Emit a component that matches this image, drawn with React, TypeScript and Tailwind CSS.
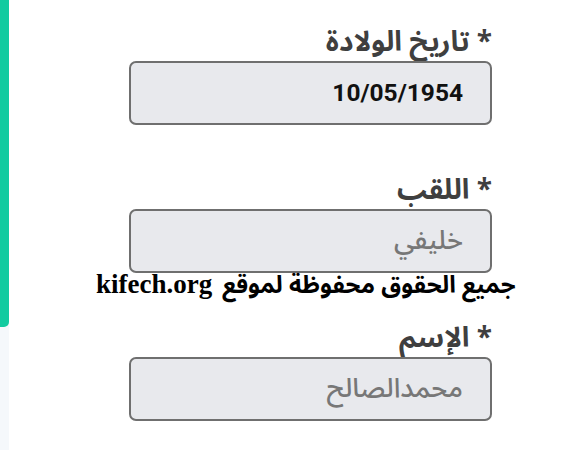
import React from "react";

const fields = [
  { label: "تاريخ الولادة", value: "10/05/1954", filled: true },
  { label: "اللقب", value: "خليفي", filled: false },
  { label: "الإسم", value: "محمدالصالح", filled: false },
];

const arabicFont = '"Noto Sans Arabic", "Noto Sans", "DejaVu Sans", sans-serif';

export default function App() {
  return (
    <div className="relative flex h-[450px] w-[561px] overflow-hidden bg-white">
      <div className="flex w-[9px] flex-col bg-[#f5f8fb]">
        <div className="h-[327px] rounded-br-[5px] bg-[#12cba0]" />
      </div>
      <div className="flex flex-1 flex-col items-end pr-[69px] pt-[24px]">
        {fields.map((f, i) => (
          <div key={i} className="mb-[47px] flex w-[363px] flex-col" dir="rtl">
            <div
              className="h-[37px] text-[28px] font-bold leading-[37px] text-[#3f3f3f]"
              style={{ fontFamily: arabicFont }}
            >
              * {f.label}
            </div>
            <div className="flex h-[64px] items-center rounded-[7px] border-2 border-[#6f6f6f] bg-[#e8e9ed] pr-[27px]">
              <span
                className={
                  f.filled
                    ? "text-[24.5px] font-bold text-[#111]"
                    : "text-[27px] font-medium text-[#777]"
                }
                style={{
                  fontFamily: f.filled ? 'Roboto, "Liberation Sans", sans-serif' : arabicFont,
                }}
                dir={f.filled ? "ltr" : "rtl"}
              >
                {f.value}
              </span>
            </div>
          </div>
        ))}
      </div>
      <div
        className="absolute left-[96px] top-[266px] flex items-baseline whitespace-nowrap font-bold leading-[36px] text-black"
        dir="ltr"
      >
        <span className="text-[27px]" style={{ fontFamily: '"Liberation Serif", serif' }}>
          kifech.org
        </span>
        <span className="ml-[10px] text-[24px]" style={{ fontFamily: arabicFont }} dir="rtl">
          جميع الحقوق محفوظة لموقع
        </span>
      </div>
    </div>
  );
}
